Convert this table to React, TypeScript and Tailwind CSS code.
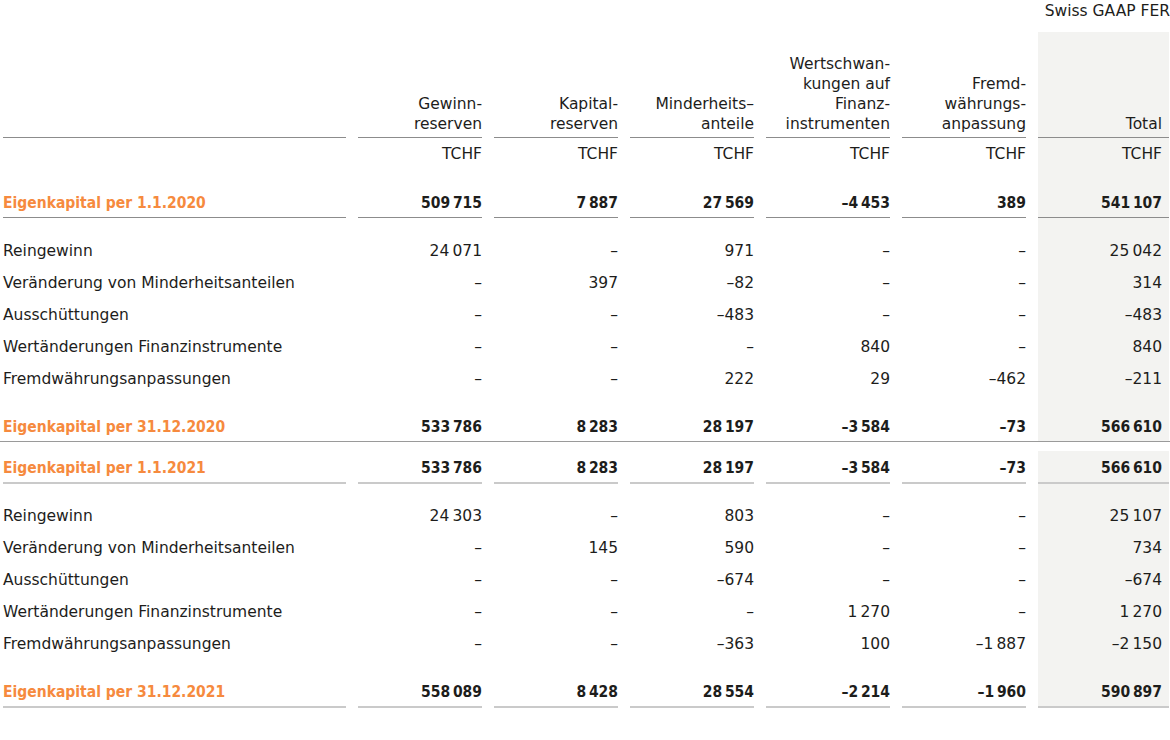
const ORANGE = "text-[#f68a3e]";
const BOLD = "font-bold font-['DejaVu_Sans_Condensed','DejaVu_Sans',sans-serif] [font-stretch:semi-condensed]";

type Row = { label: string; values: string[] };

const n = (s: string) => s.replace(/ /g, "\u202f");

const block1Body: Row[] = [
  { label: "Reingewinn", values: ["24 071", "–", "971", "–", "–", "25 042"] },
  { label: "Veränderung von Minderheitsanteilen", values: ["–", "397", "–82", "–", "–", "314"] },
  { label: "Ausschüttungen", values: ["–", "–", "–483", "–", "–", "–483"] },
  { label: "Wertänderungen Finanzinstrumente", values: ["–", "–", "–", "840", "–", "840"] },
  { label: "Fremdwährungsanpassungen", values: ["–", "–", "222", "29", "–462", "–211"] },
];

const block2Body: Row[] = [
  { label: "Reingewinn", values: ["24 303", "–", "803", "–", "–", "25 107"] },
  { label: "Veränderung von Minderheitsanteilen", values: ["–", "145", "590", "–", "–", "734"] },
  { label: "Ausschüttungen", values: ["–", "–", "–674", "–", "–", "–674"] },
  { label: "Wertänderungen Finanzinstrumente", values: ["–", "–", "–", "1 270", "–", "1 270"] },
  { label: "Fremdwährungsanpassungen", values: ["–", "–", "–363", "100", "–1 887", "–2 150"] },
];

const headers = [
  ["Gewinn-", "reserven"],
  ["Kapital-", "reserven"],
  ["Minderheits–", "anteile"],
  ["Wertschwan-", "kungen auf", "Finanz-", "instrumenten"],
  ["Fremd-", "währungs-", "anpassung"],
  ["Total"],
];

const grid = "grid grid-cols-[343px_repeat(5,124px)_131px] gap-x-3 pl-[3px]";

function Spacer({ h }: { h: string }) {
  return (
    <div className={grid}>
      <div className={h} />
      <div />
      <div />
      <div />
      <div />
      <div />
      <div className="bg-[#f3f3f1]" />
    </div>
  );
}

function BodyRow({ row }: { row: Row }) {
  return (
    <div className={`${grid} h-8 items-stretch`}>
      <div className="flex items-center pt-[2px]">{row.label}</div>
      {row.values.map((v, i) => (
        <div
          key={i}
          className={`flex items-center justify-end pt-[2px] ${i === 5 ? "bg-[#f3f3f1] pr-[7px]" : ""}`}
        >
          {n(v)}
        </div>
      ))}
    </div>
  );
}

function TotalRow({
  label,
  values,
  line,
  pad,
}: {
  label: string;
  values: string[];
  line: string;
  pad: string;
}) {
  return (
    <div className={grid}>
      <div className={`${pad} ${line} ${BOLD} ${ORANGE}`}>{label}</div>
      {values.map((v, i) => (
        <div
          key={i}
          className={`${pad} ${line} text-right ${BOLD} ${i === 5 ? "bg-[#f3f3f1] pr-[7px]" : ""}`}
        >
          {n(v)}
        </div>
      ))}
    </div>
  );
}

export default function App() {
  return (
    <div className="w-[1170px] h-[740px] bg-white text-[#1d1d1b] text-[15.5px] leading-5 font-['DejaVu_Sans',sans-serif] overflow-hidden">
      {/* standard label */}
      <div className={`${grid} h-8`}>
        <div className="col-start-7 -mr-[1px] pt-[1px] whitespace-nowrap text-right">Swiss GAAP FER</div>
      </div>

      {/* column headers */}
      <div className={grid}>
        <div className="h-[106px] border-b border-[#8c8c8c]" />
        {headers.map((h, i) => (
          <div
            key={i}
            className={`flex h-[106px] flex-col items-end justify-end border-b border-[#8c8c8c] pb-[3px] text-right ${
              i === 5 ? "bg-[#f3f3f1] pr-[7px]" : ""
            }`}
          >
            {h.map((l) => (
              <span key={l}>{l}</span>
            ))}
          </div>
        ))}
      </div>

      {/* unit row */}
      <div className={`${grid} h-11`}>
        <div />
        {headers.map((_, i) => (
          <div key={i} className={`pt-[6px] text-right ${i === 5 ? "bg-[#f3f3f1] pr-[7px]" : ""}`}>
            TCHF
          </div>
        ))}
      </div>

      <TotalRow
        label="Eigenkapital per 1.1.2020"
        values={["509 715", "7 887", "27 569", "–4 453", "389", "541 107"]}
        line="border-b border-[#8c8c8c]"
        pad="pt-[11px] pb-[4px]"
      />
      <Spacer h="h-4" />
      {block1Body.map((r) => (
        <BodyRow key={r.label} row={r} />
      ))}
      <Spacer h="h-4" />
      <div className="border-b border-[#9a9a9a]">
        <div className={grid}>
          <div className={`pt-[7px] pb-[4px] ${BOLD} ${ORANGE}`}>Eigenkapital per 31.12.2020</div>
          {["533 786", "8 283", "28 197", "–3 584", "–73", "566 610"].map((v, i) => (
            <div
              key={i}
              className={`pt-[7px] pb-[4px] text-right ${BOLD} ${i === 5 ? "bg-[#f3f3f1] pr-[7px]" : ""}`}
            >
              {n(v)}
            </div>
          ))}
        </div>
      </div>

      <div className="h-[9px]" />

      <TotalRow
        label="Eigenkapital per 1.1.2021"
        values={["533 786", "8 283", "28 197", "–3 584", "–73", "566 610"]}
        line="border-b-2 border-[#cacaca]"
        pad="pt-[7px] pb-[4px]"
      />
      <Spacer h="h-[15px]" />
      {block2Body.map((r) => (
        <BodyRow key={r.label} row={r} />
      ))}
      <Spacer h="h-4" />
      <TotalRow
        label="Eigenkapital per 31.12.2021"
        values={["558 089", "8 428", "28 554", "–2 214", "–1 960", "590 897"]}
        line="border-b-2 border-[#cacaca]"
        pad="pt-[7px] pb-[4px]"
      />
    </div>
  );
}
